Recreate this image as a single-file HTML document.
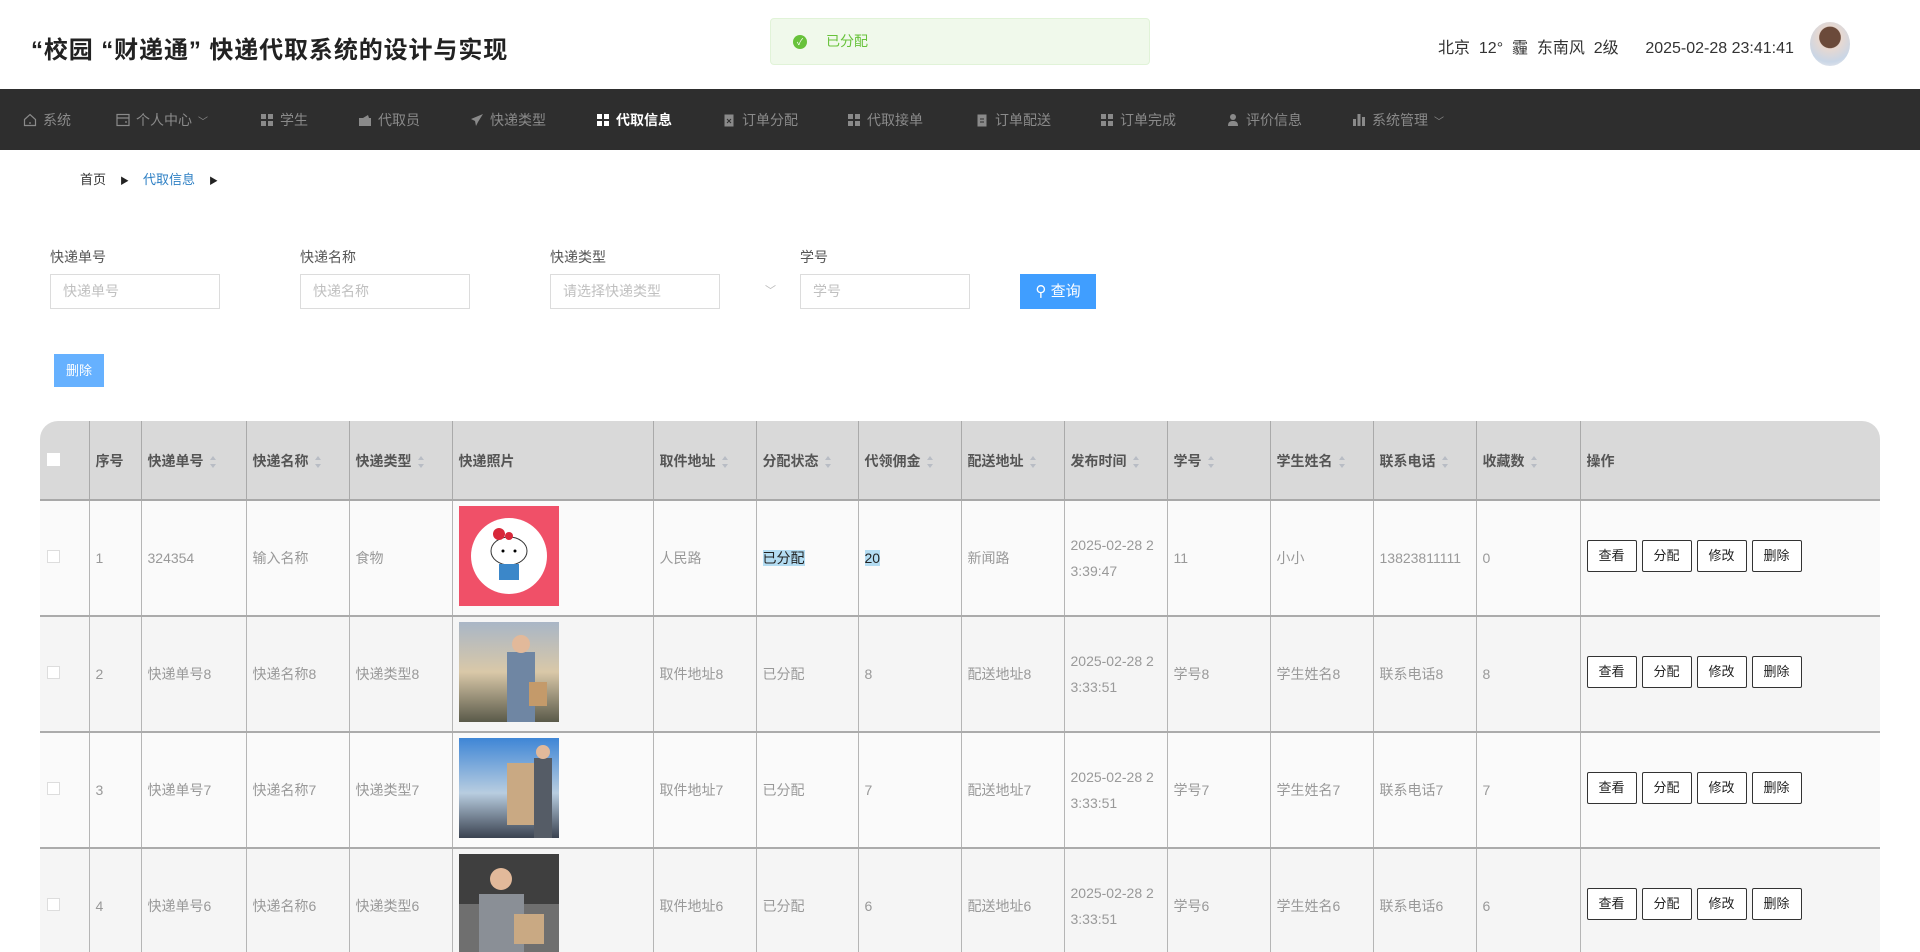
<!DOCTYPE html>
<html><head><meta charset="utf-8"><style>
*{margin:0;padding:0;box-sizing:border-box}
body{width:1920px;height:952px;overflow:hidden;background:#fff;font-family:"Liberation Sans","Noto Sans CJK SC",sans-serif;position:relative;color:#333}
.abs{position:absolute}
.title{left:31px;top:30px;font-size:24px;font-weight:bold;color:#222;letter-spacing:0.9px}
.toast{left:770px;top:18px;width:380px;height:47px;background:#f0f9eb;border:1px solid #e1f3d8;border-radius:4px;font-size:14px;color:#67c23a;line-height:45px;padding-left:55px}
.toast i{position:absolute;left:22px;top:16px;width:14px;height:14px;border-radius:50%;background:#67c23a;color:#fff;font-size:9px;line-height:14px;text-align:center;font-style:normal}
.weather{left:1438px;top:34px;font-size:16px;color:#333}
.avatar{left:1810px;top:22px;width:40px;height:44px;border-radius:50%;background:radial-gradient(circle at 50% 35%,#6b4a3a 0 30%,#e8d8d0 32%,#c9d6e6 70%,#f5f0f0 100%)}
.nav{left:0;top:89px;width:1920px;height:61px;background:#2e2e2e}
.ni{position:absolute;top:21px;font-size:14px;color:#8a8a8a;white-space:nowrap;display:flex;align-items:center;gap:6px}
.ni.act{color:#fff;font-weight:bold}
.ic{display:inline-block;width:14px;height:14px}
.bc{top:169px;left:80px;font-size:13px;color:#333}
.bc span{margin-right:14px}
.bc b{font-size:9px;margin-right:14px;color:#222}
.lbl{top:247px;font-size:14px;color:#555}
.inp{top:274px;width:170px;height:35px;border:1px solid #dcdcdc;font-size:14px;color:#c0c0c0;line-height:33px;padding-left:12px}
.qbtn{left:1020px;top:274px;width:76px;height:35px;background:#409eff;color:#fff;font-size:15px;line-height:35px;text-align:center}
.dbtn{left:54px;top:354px;width:50px;height:33px;background:#66b1ff;color:#fff;font-size:13px;line-height:33px;text-align:center}
.tw{position:absolute;left:40px;top:421px;width:1840px;height:531px;border-top-left-radius:18px;border-top-right-radius:18px;overflow:hidden}
table{position:absolute;left:0;top:0;border-collapse:collapse;table-layout:fixed;width:1840px;font-size:14px}
th{height:79px;background:#d9d9d9;color:#555;text-align:left;font-weight:bold;padding-left:6px;border-left:1px solid #aaa;border-bottom:2px solid #a8a8a8;white-space:nowrap;padding-top:2px}
th:first-child,td:first-child{border-left:none}
td{height:116px;color:#999;padding-left:6px;border-left:1px solid #b5b5b5;border-bottom:2px solid #ababab;vertical-align:middle;line-height:26px}
tr.a td{background:#fafafa}
tr.b td{background:#f5f5f5}
.s{display:inline-block;width:7px;height:12px;vertical-align:middle;margin-left:6px;position:relative}
.s:before,.s:after{content:"";position:absolute;left:0;border-left:3.5px solid transparent;border-right:3.5px solid transparent}
.s:before{top:0;border-bottom:4px solid #b8bcc4}
.s:after{bottom:0;border-top:4px solid #b8bcc4}
.cb{display:inline-block;width:13px;height:13px;border:1px solid #ddd;background:#fff;margin-left:1px}
.img{width:100px;height:100px;display:block;margin-top:-4px}
.op{display:inline-block;width:50px;height:32px;border:1px solid #333;border-radius:2px;color:#222;font-size:13px;text-align:center;line-height:30px;margin-right:5px;background:#fff;position:relative;top:-2px}
.hl{background:#b3dcf2;color:#222}
</style></head><body>
<div class="abs title">“校园 “财递通” 快递代取系统的设计与实现</div>
<div class="abs toast"><i>✓</i>已分配</div>
<div class="abs weather">北京&nbsp; 12°&nbsp; 霾&nbsp; 东南风&nbsp; 2级&nbsp;&nbsp;&nbsp;&nbsp;&nbsp; 2025-02-28 23:41:41</div>
<div class="abs avatar"></div>
<div class="abs nav">
<div class="ni" style="left:23px"><svg class="ic" viewBox="0 0 14 14" fill="none" stroke="#8a8a8a" stroke-width="1.2"><path d="M1.5 6.5L7 1.5l5.5 5v6h-11z"/><path d="M6 10h2"/></svg>系统</div>
<div class="ni" style="left:116px"><svg class="ic" viewBox="0 0 14 14" fill="none" stroke="#8a8a8a" stroke-width="1.2"><rect x="1" y="1.5" width="12" height="11"/><path d="M1 5h12M9 9h2"/></svg>个人中心 <span style="font-size:10px">﹀</span></div>
<div class="ni" style="left:260px"><svg class="ic" viewBox="0 0 14 14" fill="#8a8a8a"><rect x="1" y="1" width="5" height="5"/><rect x="8" y="1" width="5" height="5"/><rect x="1" y="8" width="5" height="5"/><rect x="8" y="8" width="5" height="5"/></svg> 学生</div>
<div class="ni" style="left:358px"><svg class="ic" viewBox="0 0 14 14" fill="#8a8a8a"><path d="M1 5h12v8H1z"/><path d="M5 5l5-3 1 3z"/></svg> 代取员</div>
<div class="ni" style="left:470px"><svg class="ic" viewBox="0 0 14 14" fill="#8a8a8a"><path d="M13 1L1 6l4 2 1 5 2-4z"/></svg> 快递类型</div>
<div class="ni act" style="left:596px"><svg class="ic" viewBox="0 0 14 14" fill="#fff"><rect x="1" y="1" width="5" height="5"/><rect x="8" y="1" width="5" height="5"/><rect x="1" y="8" width="5" height="5"/><rect x="8" y="8" width="5" height="5"/></svg> 代取信息</div>
<div class="ni" style="left:722px"><svg class="ic" viewBox="0 0 14 14" fill="#8a8a8a"><rect x="2.5" y="1.5" width="9" height="12"/><path d="M5 6l4 4M9 6l-4 4" stroke="#2e2e2e"/></svg> 订单分配</div>
<div class="ni" style="left:847px"><svg class="ic" viewBox="0 0 14 14" fill="#8a8a8a"><rect x="1" y="1" width="5" height="5"/><rect x="8" y="1" width="5" height="5"/><rect x="1" y="8" width="5" height="5"/><rect x="8" y="8" width="5" height="5"/></svg> 代取接单</div>
<div class="ni" style="left:975px"><svg class="ic" viewBox="0 0 14 14" fill="#8a8a8a"><rect x="2.5" y="1.5" width="9" height="12"/><path d="M5 6h4M5 9h4" stroke="#2e2e2e"/></svg> 订单配送</div>
<div class="ni" style="left:1100px"><svg class="ic" viewBox="0 0 14 14" fill="#8a8a8a"><rect x="1" y="1" width="5" height="5"/><rect x="8" y="1" width="5" height="5"/><rect x="1" y="8" width="5" height="5"/><rect x="8" y="8" width="5" height="5"/></svg> 订单完成</div>
<div class="ni" style="left:1226px"><svg class="ic" viewBox="0 0 14 14" fill="#8a8a8a"><circle cx="7" cy="4" r="3"/><path d="M2 13c0-4 2-5 5-5s5 1 5 5z"/></svg> 评价信息</div>
<div class="ni" style="left:1352px"><svg class="ic" viewBox="0 0 14 14" fill="#8a8a8a"><rect x="1" y="6" width="3" height="7"/><rect x="5.5" y="1" width="3" height="12"/><rect x="10" y="4" width="3" height="9"/></svg> 系统管理 <span style="font-size:10px">﹀</span></div>
</div>
<div class="abs bc"><span>首页</span><b>▶</b><span style="color:#2d7fc4">代取信息</span><b>▶</b></div>
<div class="abs lbl" style="left:50px">快递单号</div>
<div class="abs lbl" style="left:300px">快递名称</div>
<div class="abs lbl" style="left:550px">快递类型</div>
<div class="abs lbl" style="left:800px">学号</div>
<div class="abs inp" style="left:50px">快递单号</div>
<div class="abs inp" style="left:300px">快递名称</div>
<div class="abs inp" style="left:550px">请选择快递类型</div>
<div class="abs" style="left:765px;top:282px;font-size:11px;color:#bbb">﹀</div>
<div class="abs inp" style="left:800px">学号</div>
<div class="abs qbtn">&#9906; 查询</div>
<div class="abs dbtn">删除</div>
<div class="tw"><table>
<colgroup><col style="width:49px"><col style="width:52px"><col style="width:105px"><col style="width:103px"><col style="width:103px"><col style="width:201px"><col style="width:103px"><col style="width:102px"><col style="width:103px"><col style="width:103px"><col style="width:103px"><col style="width:103px"><col style="width:103px"><col style="width:103px"><col style="width:104px"><col style="width:300px"></colgroup>
<tr><th><span class="cb" style="border-color:#fff"></span></th><th>序号</th><th>快递单号<i class="s"></i></th><th>快递名称<i class="s"></i></th><th>快递类型<i class="s"></i></th><th>快递照片</th><th>取件地址<i class="s"></i></th><th>分配状态<i class="s"></i></th><th>代领佣金<i class="s"></i></th><th>配送地址<i class="s"></i></th><th>发布时间<i class="s"></i></th><th>学号<i class="s"></i></th><th>学生姓名<i class="s"></i></th><th>联系电话<i class="s"></i></th><th>收藏数<i class="s"></i></th><th>操作</th></tr>
<tr class="a"><td><span class="cb"></span></td><td>1</td><td>324354</td><td>输入名称</td><td>食物</td><td><svg class="img" viewBox="0 0 100 100"><rect width="100" height="100" fill="#f05068"/><circle cx="50" cy="50" r="38" fill="#fff"/><ellipse cx="50" cy="45" rx="18" ry="14" fill="#fff" stroke="#333" stroke-width="1"/><circle cx="40" cy="28" r="6" fill="#d8283a"/><circle cx="50" cy="30" r="4" fill="#d8283a"/><rect x="40" y="58" width="20" height="16" fill="#3b87c9"/><circle cx="44" cy="45" r="1.5" fill="#000"/><circle cx="56" cy="45" r="1.5" fill="#000"/></svg></td><td>人民路</td><td><span class="hl">已分配</span></td><td><span class="hl">20</span></td><td>新闻路</td><td>2025-02-28 2<br>3:39:47</td><td>11</td><td>小小</td><td>13823811111</td><td>0</td><td><span class="op">查看</span><span class="op">分配</span><span class="op">修改</span><span class="op">删除</span></td></tr>
<tr class="b"><td><span class="cb"></span></td><td>2</td><td>快递单号8</td><td>快递名称8</td><td>快递类型8</td><td><svg class="img" viewBox="0 0 100 100"><defs><linearGradient id="g1" x1="0" y1="0" x2="0" y2="1"><stop offset="0" stop-color="#a9b6c6"/><stop offset=".5" stop-color="#d9c8a8"/><stop offset="1" stop-color="#5a5a4a"/></linearGradient></defs><rect width="100" height="100" fill="url(#g1)"/><rect x="48" y="30" width="28" height="70" fill="#6f86a3"/><circle cx="62" cy="22" r="9" fill="#e2b99a"/><rect x="70" y="60" width="18" height="24" fill="#c49a6a"/></svg></td><td>取件地址8</td><td>已分配</td><td>8</td><td>配送地址8</td><td>2025-02-28 2<br>3:33:51</td><td>学号8</td><td>学生姓名8</td><td>联系电话8</td><td>8</td><td><span class="op">查看</span><span class="op">分配</span><span class="op">修改</span><span class="op">删除</span></td></tr>
<tr class="a"><td><span class="cb"></span></td><td>3</td><td>快递单号7</td><td>快递名称7</td><td>快递类型7</td><td><svg class="img" viewBox="0 0 100 100"><defs><linearGradient id="g2" x1="0" y1="0" x2="0" y2="1"><stop offset="0" stop-color="#3f86d6"/><stop offset=".55" stop-color="#b8cde0"/><stop offset="1" stop-color="#3a4250"/></linearGradient></defs><rect width="100" height="100" fill="url(#g2)"/><rect x="48" y="25" width="32" height="62" fill="#c9a983"/><rect x="75" y="20" width="18" height="80" fill="#555c66"/><circle cx="84" cy="14" r="7" fill="#e2b99a"/></svg></td><td>取件地址7</td><td>已分配</td><td>7</td><td>配送地址7</td><td>2025-02-28 2<br>3:33:51</td><td>学号7</td><td>学生姓名7</td><td>联系电话7</td><td>7</td><td><span class="op">查看</span><span class="op">分配</span><span class="op">修改</span><span class="op">删除</span></td></tr>
<tr class="b"><td><span class="cb"></span></td><td>4</td><td>快递单号6</td><td>快递名称6</td><td>快递类型6</td><td><svg class="img" viewBox="0 0 100 100"><rect width="100" height="100" fill="#6f6f6f"/><rect x="0" y="0" width="100" height="50" fill="#3f3f3f"/><rect x="20" y="40" width="45" height="60" fill="#8a8f96"/><circle cx="42" cy="25" r="11" fill="#e2b99a"/><rect x="55" y="60" width="30" height="30" fill="#c9a983"/></svg></td><td>取件地址6</td><td>已分配</td><td>6</td><td>配送地址6</td><td>2025-02-28 2<br>3:33:51</td><td>学号6</td><td>学生姓名6</td><td>联系电话6</td><td>6</td><td><span class="op">查看</span><span class="op">分配</span><span class="op">修改</span><span class="op">删除</span></td></tr>
</table></div>
</body></html>
